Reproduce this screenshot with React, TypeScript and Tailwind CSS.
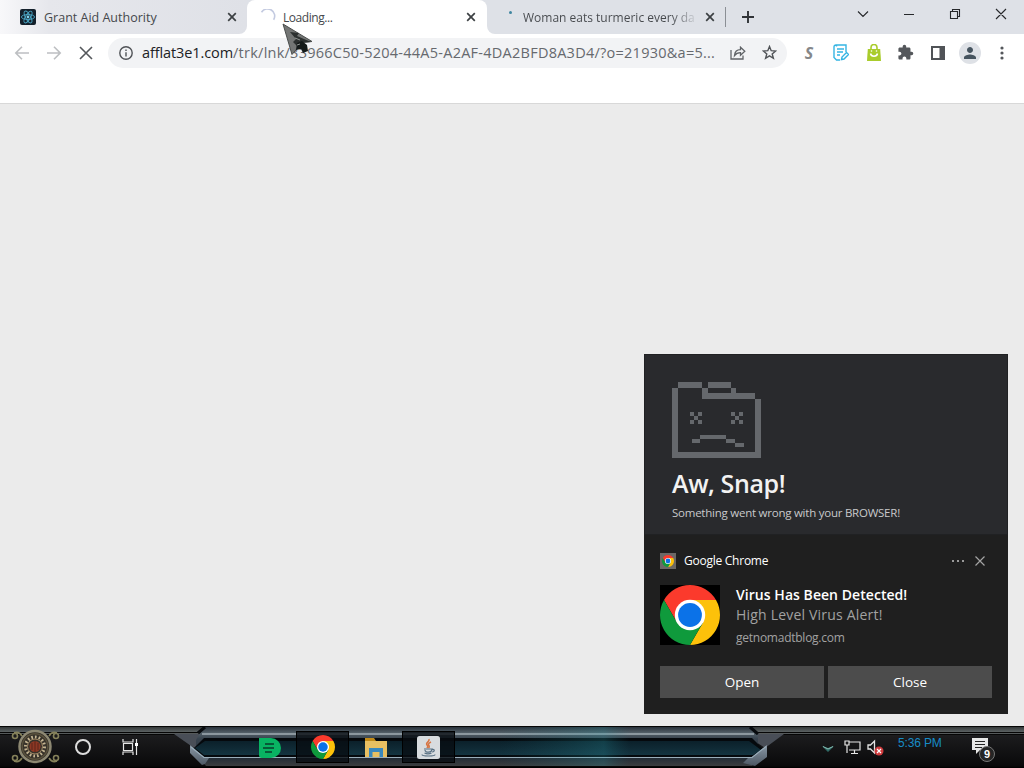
import type { ReactNode } from "react";
import { MdExtension, MdPerson } from "react-icons/md";

function TabClose() {
  return (
    <svg width="10" height="10" viewBox="0 0 10 10" stroke="#3c4043" strokeWidth="1.7" className="shrink-0">
      <path d="M1.2 1.2l7.6 7.6M8.8 1.2L1.2 8.8" />
    </svg>
  );
}

function ReactBadge() {
  return (
    <svg width="16" height="16" viewBox="0 0 16 16" className="shrink-0">
      <rect width="16" height="16" rx="2" fill="#14202b" />
      <g fill="none" stroke="#4aa5c4" strokeWidth="0.9">
        <ellipse cx="8" cy="8" rx="6.6" ry="2.5" />
        <ellipse cx="8" cy="8" rx="6.6" ry="2.5" transform="rotate(60 8 8)" />
        <ellipse cx="8" cy="8" rx="6.6" ry="2.5" transform="rotate(120 8 8)" />
      </g>
      <circle cx="8" cy="8" r="1.4" fill="#7fd3ee" />
    </svg>
  );
}

function ChromeLogo({ size }: { size: number }) {
  return (
    <svg width={size} height={size} viewBox="0 0 60 60" className="block shrink-0">
      <path d="M30 30L17 37.5L4.02 15A30 30 0 0 1 55.98 15H30Z" fill="#fb3a2c" />
      <path d="M30 15H55.98A30 30 0 0 1 30 60L43 37.5Z" fill="#fdc10a" />
      <path d="M4.02 15L17 37.5L43 37.5L30 60A30 30 0 0 1 4.02 15Z" fill="#0f9a3c" />
      <circle cx="30" cy="30" r="15.2" fill="#fff" />
      <circle cx="30" cy="30" r="11.9" fill="#0b72e8" />
    </svg>
  );
}

function TabStrip() {
  return (
    <div className="flex h-[34px] bg-white text-[#45484c]">
      <div className="flex w-[247px] items-center rounded-br-lg bg-linear-to-r from-[#f8f8fa] via-[#e6e7ec] via-20% to-[#dfe1e7] pl-5 pr-[10px]">
        <ReactBadge />
        <span className="ml-2 flex-1 whitespace-nowrap pt-0.5 text-[12.5px]">Grant Aid Authority</span>
        <TabClose />
      </div>
      <div className="w-[240px] bg-[#dee1e7]">
        <div className="flex h-full items-center rounded-t-lg bg-white pl-3 pr-[11px]">
          <svg width="17" height="17" viewBox="0 0 17 17" fill="none" stroke="#c3cae0" strokeWidth="1.6" className="shrink-0">
            <path d="M2.5 3.2A7 7 0 0 1 14.6 10.8" />
          </svg>
          <span className="ml-[7px] flex-1 whitespace-nowrap pt-0.5 text-[12px] tracking-[-0.45px]">Loading...</span>
          <TabClose />
        </div>
      </div>
      <div className="flex flex-1 items-center rounded-bl-lg bg-[#dee1e7] pl-[22px]">
        <span className="mb-2.5 h-[3px] w-[3px] rounded-full bg-[#3f86a0]" />
        <span className="ml-[11px] w-[173px] whitespace-nowrap bg-linear-to-r from-[#45484c] from-85% to-[#d0d3d9] bg-clip-text pt-0.5 text-[12px] text-transparent">
          Woman eats turmeric every da
        </span>
        <span className="ml-[9px]"><TabClose /></span>
        <span className="ml-[10px] h-5 w-px bg-[#8b8f95]" />
        <svg width="12" height="12" viewBox="0 0 12 12" stroke="#303337" strokeWidth="1.9" className="ml-4">
          <path d="M6 0v12M0 6h12" />
        </svg>
        <svg width="150" height="14" viewBox="0 0 150 14" fill="none" stroke="#26282b" strokeWidth="1.1" className="mb-1.5 ml-[103px]">
          <path d="M1 4.5l5 5 5-5M47 7.5h10M93.5 4.5h7v7h-7zM95.5 4.5v-2h7v7h-2M139 2l10 10M149 2l-10 10" />
        </svg>
      </div>
    </div>
  );
}

function Toolbar() {
  return (
    <div className="flex h-[37px] items-center bg-white pl-[14px]">
      <svg width="80" height="16" viewBox="0 0 80 16" fill="none" stroke="#bdbfc2" strokeWidth="1.6">
        <path d="M15 8H2M8 1.8L1.8 8 8 14.2M33 8h13M40 1.8L46.2 8 40 14.2" />
        <path d="M66 2l12 12M78 2L66 14" stroke="#54575b" />
      </svg>
      <div className="ml-[14px] flex h-[30px] w-[679px] items-center rounded-full bg-[#f2f3f5] pl-[11px] text-[#66696e]">
        <svg width="14" height="14" viewBox="0 0 14 14" fill="none" stroke="#505357" strokeWidth="1.4" className="shrink-0">
          <circle cx="7" cy="7" r="6.2" />
          <path d="M7 6.2v4.3M7 3.5v1.5" />
        </svg>
        <span className="ml-[9px] w-[580px] shrink-0 whitespace-nowrap pt-px text-[14.5px] tracking-[0.25px]">
          <span className="tracking-[-0.1px] text-[#202124]">afflat3e1.com</span>/trk/lnk/33966C50-5204-44A5-A2AF-4DA2BFD8A3D4/?o=21930&amp;a=5...
        </span>
        <svg width="16" height="14" viewBox="0 0 16 14" fill="none" stroke="#606367" strokeWidth="1.3" className="ml-2 shrink-0">
          <path d="M1 4v9h12V9.500M4.500 9.500c.4-4 2.500-5.800 6-5.800V1.200l4.300 4-4.300 4V6.600c-2.800 0-4.500.8-6 2.900z" />
        </svg>
        <svg width="15" height="15" viewBox="0 0 15 15" fill="none" stroke="#505357" strokeWidth="1.4" className="ml-4 shrink-0">
          <path d="M7.500 1.500l1.700 4.200 4.500.3-3.500 2.900 1.200 4.400-3.900-2.400-3.900 2.400 1.200-4.400L1.300 6l4.500-.3z" />
        </svg>
      </div>
      <span className="ml-[16px] w-3 text-center text-[16px] font-bold italic text-[#85878a]">S</span>
      <svg width="16" height="17" viewBox="0 0 16 17" fill="none" stroke="#35b5e3" strokeWidth="1.4" className="ml-[18px]">
        <path d="M7 16H3.500L1 13.500V3q0-2 2-2h10v7M3.500 1v1.500M4 5h7M4 8h6M4 11h3" />
        <path d="M8.500 15.500l.5-2.500 4.500-4.500 2 2-4.500 4.500z" />
      </svg>
      <svg width="14" height="17" viewBox="0 0 14 17" fill="none" className="ml-[18px]">
        <path d="M.8 5h12.400l.8 12H0z" fill="#a9cc2c" />
        <path d="M4 6V3.500a3 3 0 0 1 6 0V6" stroke="#a9cc2c" strokeWidth="1.6" />
        <path d="M3.500 9.500c.6 3.500 6.400 3.500 7 0" stroke="#fff" strokeWidth="1.5" />
        <circle cx="4.5" cy="7" r=".8" fill="#fff" />
        <circle cx="9.5" cy="7" r=".8" fill="#fff" />
      </svg>
      <MdExtension size={17} color="#54575b" className="ml-4" />
      <svg width="14" height="14" viewBox="0 0 14 14" className="ml-[17px]">
        <path d="M0 0h14v14H0zM2 2v10h6.500V2z" fill="#505357" fillRule="evenodd" />
      </svg>
      <span className="ml-[14px] flex h-[22px] w-[22px] items-center justify-center rounded-full bg-[#dee1e6]">
        <MdPerson size={18} color="#46545f" />
      </span>
      <svg width="4" height="14" viewBox="0 0 4 14" fill="#54575b" className="ml-[19px]">
        <circle cx="2" cy="2" r="1.6" />
        <circle cx="2" cy="7" r="1.6" />
        <circle cx="2" cy="12" r="1.6" />
      </svg>
    </div>
  );
}

function SadFolder() {
  return (
    <svg width="90" height="78" viewBox="0 0 90 78" fill="#65686c" shapeRendering="crispEdges">
      <path d="M6 1h24v6H6zM0 7h6v64h77V18h6v59H0zM30 7h6v5h47v6H30zM36 1h23v6H36zM59 7h5v5h-5z" />
      <path d="M18 31h4v4h-4zM26 31h4v4h-4zM22 35h4v4h-4zM18 39h4v4h-4zM26 39h4v4h-4z" />
      <path d="M59 31h4v4h-4zM67 31h4v4h-4zM63 35h4v4h-4zM59 39h4v4h-4zM67 39h4v4h-4z" />
      <path d="M28 54h26v4H28zM20 58h8v4h-8zM54 58h9v4h-9zM63 62h9v4h-9z" />
    </svg>
  );
}

function ToastButton({ children }: { children: ReactNode }) {
  return <button className="h-8 flex-1 bg-[#4c4c4c] text-[13.5px] text-white">{children}</button>;
}

function Toast() {
  return (
    <div className="absolute left-[644px] top-[354px] flex h-[360px] w-[364px] flex-col bg-[#1f1f1f] font-['Open_Sans',sans-serif]">
      <div className="h-[181px] border border-[#202123] bg-[#292a2d] pl-[27px] pt-[26px]">
        <SadFolder />
        <div className="mt-[7px] whitespace-nowrap text-[25px] font-semibold leading-[34px] tracking-[-0.4px] text-[#f2f2f2]">Aw, Snap!</div>
        <div className="mt-[5px] whitespace-nowrap text-[11.5px] leading-4 tracking-[-0.24px] text-[#c8c9cb]">Something went wrong with your BROWSER!</div>
      </div>
      <div className="flex items-center pl-4 pr-[23px] pt-[17px]">
        <span className="flex h-4 w-4 items-center justify-center bg-[#6c6866]"><ChromeLogo size={12} /></span>
        <span className="ml-2 flex-1 text-[12px] leading-[18px] tracking-[-0.25px] text-white">Google Chrome</span>
        <svg width="12" height="2" viewBox="0 0 12 2" fill="#9a9a9a">
          <path d="M0 0h2v2H0zM5 0h2v2H5zM10 0h2v2h-2z" />
        </svg>
        <svg width="10" height="10" viewBox="0 0 10 10" stroke="#a4a4a4" strokeWidth="1.2" className="ml-[11px]">
          <path d="M.5.500l9 9M9.500.500l-9 9" />
        </svg>
      </div>
      <div className="flex pl-4 pt-[15px]">
        <span className="h-[60px] w-[60px] bg-black"><ChromeLogo size={60} /></span>
        <div className="ml-4 whitespace-nowrap">
          <div className="text-[14px] font-semibold leading-5 tracking-[0.05px] text-white">Virus Has Been Detected!</div>
          <div className="text-[14px] leading-5 tracking-[0.2px] text-[#a2a2a2]">High Level Virus Alert!</div>
          <div className="mt-[4px] text-[12px] leading-[18px] tracking-[-0.25px] text-[#a2a2a2]">getnomadtblog.com</div>
        </div>
      </div>
      <div className="mt-[19px] flex gap-1 px-4">
        <ToastButton>Open</ToastButton>
        <ToastButton>Close</ToastButton>
      </div>
    </div>
  );
}

function TaskbarFrame() {
  return (
    <svg width="1024" height="42" viewBox="0 0 1024 42" className="absolute left-0 top-0">
      <defs>
        <linearGradient id="rail" x1="0" x2="0" y1="0" y2="1">
          <stop offset="0" stopColor="#343839" />
          <stop offset="1" stopColor="#5c6263" />
        </linearGradient>
        <linearGradient id="base" x1="0" x2="0" y1="0" y2="1">
          <stop offset="0" stopColor="#1c1c1e" />
          <stop offset="1" stopColor="#09090a" />
        </linearGradient>
        <linearGradient id="steel" x1="0" x2="0" y1="0" y2="1">
          <stop offset="0" stopColor="#29313a" />
          <stop offset="0.15" stopColor="#536069" />
          <stop offset="0.3" stopColor="#39444f" />
          <stop offset="0.8" stopColor="#242d36" />
          <stop offset="1" stopColor="#3b3d3f" />
        </linearGradient>
        <linearGradient id="well" x1="0" x2="0" y1="0" y2="1">
          <stop offset="0" stopColor="#0b202a" />
          <stop offset="1" stopColor="#143440" />
        </linearGradient>
        <linearGradient id="chevron" x1="0" x2="0" y1="0" y2="1">
          <stop offset="0" stopColor="#8b99a6" />
          <stop offset="1" stopColor="#4b5662" />
        </linearGradient>
        <linearGradient id="glow">
          <stop offset="0" stopColor="#1d7580" stopOpacity="0" />
          <stop offset="0.8" stopColor="#299aa5" stopOpacity="0.25" />
          <stop offset="1" stopColor="#1d7580" stopOpacity="0" />
        </linearGradient>
      </defs>
      <rect width="1024" height="42" fill="#060606" />
      <rect y="9" width="1024" height="31" fill="url(#base)" />
      <rect y="1" width="1024" height="5" fill="url(#rail)" />
      <rect y="7" width="1024" height="1" fill="#55595a" />
      <path d="M174 8h28v8l-8 6zM784 8h-28v8l9 6z" fill="#494e57" />
      <path d="M204 1h546l8 7v22l-6 10H206l-10-12v-14l4-7z" fill="url(#steel)" />
      <path d="M205 1l-7 6M750 1l8 7" stroke="#080b0e" strokeWidth="3" />
      <path d="M204 12h548l13 13-10 7H202l-9-9z" fill="#05090d" />
      <path d="M205 15h544l12 9-8 5H204l-9-7z" fill="url(#well)" />
      <path d="M202 8h552" stroke="#a1adb5" strokeWidth="1.3" />
      <path d="M190 19l14 12h548l15-12v12l-12 9-12-3 5-5H209l-4 6-3 1-12-12z" fill="url(#chevron)" />
      <path d="M191 21l13 10.500h548l14-11" fill="none" stroke="#9aaebb" strokeWidth="1.2" />
      <rect x="500" y="1" width="130" height="39" fill="url(#glow)" />
      <path d="M0 41.500h1024" stroke="#000" />
    </svg>
  );
}

function StartOrb() {
  return (
    <svg width="50" height="40" viewBox="0 0 50 40" fill="none" className="relative shrink-0">
      <g stroke="#85815a" strokeWidth="1.6">
        <circle cx="5" cy="9" r="2.5" /><circle cx="46" cy="9" r="2.5" />
        <circle cx="5" cy="31" r="2.5" /><circle cx="46" cy="31" r="2.5" />
        <path d="M4 6q5-2 8 3M47 6q-5-2-8 3M4 34q5 2 8-3M47 34q-5 2-8-3" />
      </g>
      <circle cx="25" cy="19.500" r="15.500" fill="#37322a" stroke="#8d8872" strokeWidth="2.5" />
      <circle cx="25" cy="19.500" r="12.800" stroke="#59513c" strokeWidth="1.5" />
      <circle cx="25" cy="19.500" r="9.500" stroke="#c3b491" strokeWidth="3" strokeDasharray="1.7 2" />
      <circle cx="25" cy="19.500" r="7.500" stroke="#a58b67" />
      <circle cx="25" cy="19.500" r="5.500" fill="#8d3824" />
      <path d="M25 14v11M22 16v7M28 16v7" stroke="#5a241a" />
    </svg>
  );
}

function TaskSlot({ active, children }: { active?: boolean; children: ReactNode }) {
  return (
    <div className={`relative flex h-8 w-[53px] items-center justify-center ${active ? "border border-black bg-[#080d12]/80" : ""}`}>
      {children}
    </div>
  );
}

function Taskbar() {
  return (
    <div className="relative flex h-[42px] items-center">
      <TaskbarFrame />
      <div className="relative flex w-[243px] items-center pl-[10px]">
        <StartOrb />
        <span className="ml-[15px] h-4 w-4 rounded-full border-[2.5px] border-[#dddddd]" />
        <svg width="17" height="16" viewBox="0 0 17 16" fill="none" stroke="#e5e5e5" strokeWidth="1.2" className="ml-[31px]">
          <path d="M1 0v3h10V0M1 16v-3h10v3M1.500 4.500h9v7h-9zM14.500 0v4M14.500 7v9" />
          <path d="M13 4h3v3h-3z" fill="#fff" stroke="none" />
        </svg>
      </div>
      <div className="flex w-[559px]">
        <TaskSlot>
          <svg width="22" height="20" viewBox="0 0 22 20" className="mt-px">
            <path d="M0 0h12a10 10 0 0 1 0 20H3q-3 0-3-3z" fill="#08b362" />
            <path d="M6 6h9M4 10h11M6 14h7" stroke="#073d2b" strokeWidth="1.7" />
          </svg>
        </TaskSlot>
        <TaskSlot active><ChromeLogo size={24} /></TaskSlot>
        <TaskSlot>
          <svg width="22" height="20" viewBox="0 0 22 20">
            <path d="M0 1h9l2 3v5H0z" fill="#c18a18" />
            <path d="M0 4h22v16H0z" fill="#e8c062" />
            <path d="M4 11h14v9h-3.500v-5h-7v5H4z" fill="#3988bd" />
          </svg>
        </TaskSlot>
        <TaskSlot active>
          <svg width="23" height="23" viewBox="0 0 23 23" fill="none">
            <rect width="23" height="23" rx="2.5" fill="#d8dcdf" />
            <path d="M12 3c1 3-4 3.500-2 6 1 1.200 1 2-.2 3M14 6c-3 1.500-3 2.500-1.800 4q.5 1-.7 2" stroke="#d77543" strokeWidth="1.5" />
            <path d="M7 13h8c0 4-7 4-7 1M15 13.500c3-.5 3 2 0 2.500M7.500 17c2 1 5 1 7 0M5 18.500c0 2 13 2 13 0" stroke="#587083" strokeWidth="1.2" />
          </svg>
        </TaskSlot>
      </div>
      <div className="relative flex flex-1 items-center pl-[20px]">
        <svg width="12" height="8" viewBox="0 0 12 8" fill="none" className="mt-1 shrink-0">
          <path d="M0 1l6 6 6-6-6 2z" fill="#306b67" />
          <path d="M1 1.500l5 2.500 5-2.500" stroke="#88bcb2" />
        </svg>
        <svg width="17" height="15" viewBox="0 0 17 15" fill="none" stroke="#e6e6e6" strokeWidth="1.2" className="ml-[10px] shrink-0">
          <path d="M5 2h11v8H5M1 1h4v4H1zM3 5v8M10.500 10v3M7 13.500h7" />
        </svg>
        <svg width="17" height="17" viewBox="0 0 17 17" fill="none" className="ml-[6px] shrink-0">
          <path d="M1 6h2.500l4-4v12l-4-4H1z" stroke="#e5e5e5" strokeWidth="1.3" />
          <circle cx="12" cy="12" r="4.5" fill="#cf3b3d" />
          <path d="M10 10l4 4M14 10l-4 4" stroke="#fff" strokeWidth="1.2" />
        </svg>
        <span className="mb-2 ml-[14px] w-[46px] whitespace-nowrap font-['Liberation_Sans',sans-serif] text-[12px] tracking-[-0.15px] text-[#178cc7]">5:36 PM</span>
        <span className="relative ml-[28px] mt-0.5 h-5 w-6">
          <svg width="17" height="16" viewBox="0 0 17 16">
            <path d="M0 0h16v12H8l-4 4v-4H0z" fill="#e7e7e7" />
            <path d="M3 3.500h10M3 6.500h10M3 9.500h7" stroke="#242424" />
          </svg>
          <span className="absolute left-[7px] top-[8px] flex h-4 w-4 items-center justify-center rounded-full border border-[#777777] bg-[#252525] font-['Liberation_Sans',sans-serif] text-[11px] font-bold leading-none text-white">9</span>
        </span>
      </div>
    </div>
  );
}

function Cursor() {
  return (
    <svg width="32" height="33" viewBox="0 0 32 33" className="absolute left-[282px] top-[23px]">
      <path d="M1 1l29 17.500-11 1-3 5-6 7z" fill="#747675" stroke="#4a4d4c" strokeWidth="1" />
      <path d="M8 9l9 1-2 3 14 6-10 1-4 3-4-4 3-3z" fill="#2c302f" />
      <path d="M15 20l5-2 5 4 1 6-5 2-2-4-5 1z" fill="#151a19" />
      <path d="M13 15l5 2M15 22l3-1" stroke="#8f9492" />
    </svg>
  );
}

export default function App() {
  return (
    <div className="relative flex h-[768px] w-[1024px] flex-col overflow-hidden bg-[#ebebeb] font-['Open_Sans',sans-serif]">
      <TabStrip />
      <Toolbar />
      <div className="h-[33px] border-b border-[#d8d8d8] bg-white" />
      <div className="flex-1" />
      <Taskbar />
      <Toast />
      <Cursor />
    </div>
  );
}
